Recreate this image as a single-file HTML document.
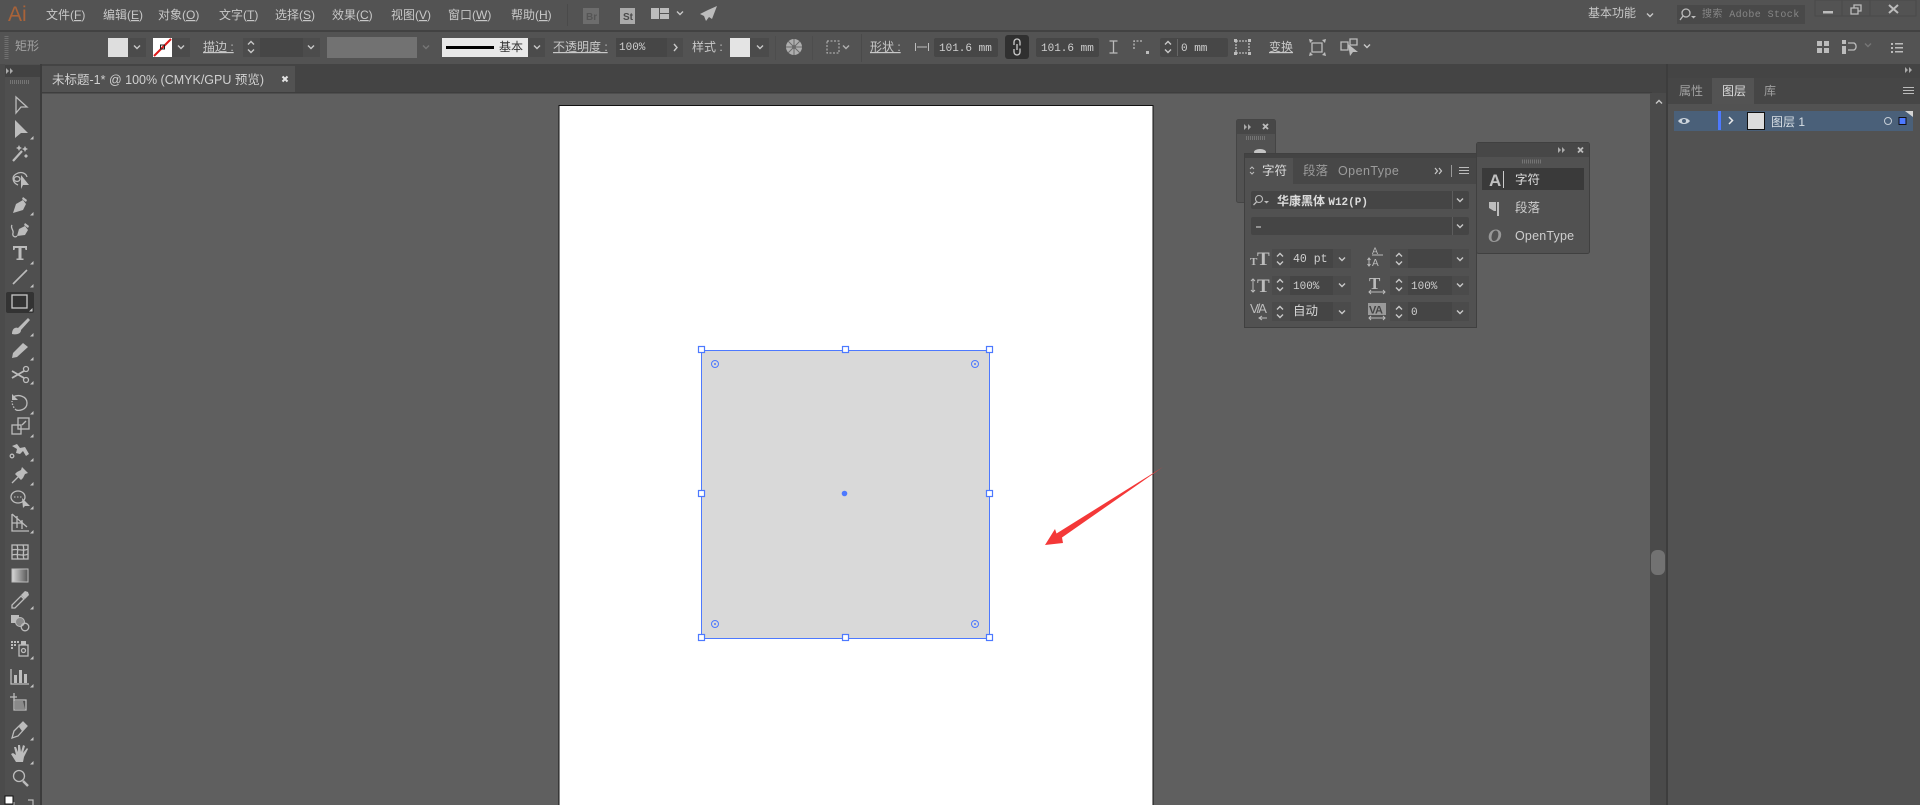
<!DOCTYPE html>
<html lang="zh"><head><meta charset="utf-8"><title>Ai</title>
<style>
html,body{margin:0;padding:0;background:#5f5f5f;width:1920px;height:805px;overflow:hidden}
svg{display:block;filter:blur(.35px)}
text{font-family:"Liberation Sans","WenQuanYi Zen Hei","Noto Sans CJK SC",sans-serif;font-size:12px;fill:#c8c8c8}
.m{font-family:"Liberation Mono","WenQuanYi Zen Hei",monospace;font-size:11px;fill:#d0d0d0}
.u{text-decoration:underline}
.ic{fill:none;stroke:#bcbcbc;stroke-width:1.300}
.fl{fill:#bcbcbc;stroke:none}
.ch{fill:none;stroke:#c8c8c8;stroke-width:1.400}
.h{fill:#fff;stroke:#4d79ff;stroke-width:1.200}
</style></head><body>
<svg width="1920" height="805" viewBox="0 0 1920 805" xmlns="http://www.w3.org/2000/svg">
<defs>
<path id="c" class="ch" d="M-3-1.500L0 1.500L3-1.500"/>
<path id="cu" class="ch" d="M-3 1.500L0-1.500L3 1.500"/>
<g id="sp"><use href="#cu" y="-4"/><use href="#c" y="4"/></g>
<path id="t" d="M0 3.500H3.500V0Z" fill="#c4c4c4"/>
<path id="ff" d="M-3-3L0 0L-3 3ZM1-3L4 0L1 3Z" fill="#aaa"/>
</defs>

<!-- base -->
<rect width="1920" height="805" fill="#5f5f5f"/>
<!-- top bar -->
<rect width="1920" height="30" fill="#535353"/>
<rect y="30" width="1920" height="2" fill="#424242"/>
<rect y="32" width="1920" height="32" fill="#535353"/>
<!-- tab bar -->
<rect y="64" width="1920" height="29" fill="#444"/>
<rect x="42" y="66" width="253" height="27" fill="#525252"/>
<rect x="42" y="92" width="1610" height="1.500" fill="#3e3e3e"/>

<!-- menu -->
<text x="8" y="21" style="font-size:21px;fill:#a96339;font-weight:400">Ai</text>
<g>
<text x="46" y="19">文件(<tspan class="u">F</tspan>)</text>
<text x="103" y="19">编辑(<tspan class="u">E</tspan>)</text>
<text x="158" y="19">对象(<tspan class="u">O</tspan>)</text>
<text x="219" y="19">文字(<tspan class="u">T</tspan>)</text>
<text x="275" y="19">选择(<tspan class="u">S</tspan>)</text>
<text x="332" y="19">效果(<tspan class="u">C</tspan>)</text>
<text x="391" y="19">视图(<tspan class="u">V</tspan>)</text>
<text x="448" y="19">窗口(<tspan class="u">W</tspan>)</text>
<text x="511" y="19">帮助(<tspan class="u">H</tspan>)</text>
</g>
<rect x="567" y="4" width="1" height="22" fill="#4a4a4a"/>
<rect x="583" y="8" width="16" height="16" fill="#6d6d6d"/>
<text x="586" y="20" style="font-size:10px;fill:#555;font-weight:700">Br</text>
<rect x="620" y="8" width="15" height="16" fill="#aaa"/>
<text x="623" y="20" style="font-size:10px;fill:#4a4a4a;font-weight:700">St</text>
<path class="fl" d="M651 8h8v11h-8zM660 8h9v5h-9zM660 14h9v5h-9z"/>
<use href="#c" x="680" y="13"/>
<path class="fl" d="M717 6L708 10L700 14L704 16L706 21L709 17L712 19Z"/>

<text x="1588" y="17">基本功能</text>
<use href="#c" x="1650" y="15"/>
<rect x="1677" y="5" width="128" height="19" fill="#494949"/>
<circle cx="1686" cy="13" r="4" class="ic"/><path class="ic" d="M1683 16L1680 20"/><path class="fl" d="M1691 16h5l-2.500 2.500z"/>
<text x="1702" y="17" class="m" style="font-size:10px;fill:#868686;letter-spacing:.4px">搜索 Adobe Stock</text>
<rect x="1815" y="0" width="101" height="16" fill="none" stroke="#4a4a4a"/>
<path d="M1842 0v16M1870 0v16" stroke="#4a4a4a"/>
<rect x="1823" y="11" width="10" height="2.500" fill="#bcbcbc"/>
<path class="ic" d="M1851 8h7v6h-7zM1854 8V5h7v6h-3"/>
<path class="ic" style="stroke-width:2" d="M1889 5l9 8M1898 5l-9 8"/>

<!-- control bar -->
<path d="M6.500 36V60" stroke="#707070" stroke-width="4" stroke-dasharray="1 1"/>
<text x="15" y="50" style="fill:#a2a2a2">矩形</text>
<rect x="108" y="38" width="20" height="19" fill="#dedede"/>
<rect x="128" y="38" width="18" height="19" fill="#4b4b4b"/>
<use href="#c" x="137" y="47"/>
<rect x="153" y="38" width="19" height="19" fill="#fff"/>
<path d="M154 56L171 39" stroke="#e01a1a" stroke-width="2"/>
<rect x="160.500" y="45" width="4" height="4" fill="none" stroke="#222"/>
<rect x="172" y="38" width="18" height="19" fill="#4b4b4b"/>
<use href="#c" x="181" y="47"/>
<text x="203" y="51" style="text-decoration:underline dotted">描边 :</text>
<rect x="243" y="38" width="77" height="19" fill="#4c4c4c"/>
<use href="#sp" x="251" y="47"/>
<rect x="260" y="38" width="43" height="19" fill="#464646"/>
<use href="#c" x="311" y="47"/>
<rect x="327" y="37" width="90" height="21" fill="#727272"/>
<use href="#c" x="426" y="47" opacity=".3"/>
<rect x="442" y="38" width="86" height="19" fill="#e8e8e8"/>
<rect x="446" y="46" width="48" height="3" fill="#000"/>
<text x="499" y="51" style="fill:#333">基本</text>
<rect x="528" y="38" width="17" height="19" fill="#4b4b4b"/>
<use href="#c" x="537" y="47"/>
<text x="553" y="51" style="text-decoration:underline dotted">不透明度 :</text>
<rect x="616" y="38" width="51" height="19" fill="#464646"/>
<text x="619" y="50" class="m">100%</text>
<rect x="667" y="38" width="16" height="19" fill="#4c4c4c"/>
<path class="ch" d="M674 44l3 3.500-3 3.500"/>
<text x="692" y="51">样式 :</text>
<rect x="730" y="38" width="20" height="19" fill="#e4e4e4"/>
<rect x="750" y="38" width="19" height="19" fill="#4b4b4b"/>
<use href="#c" x="760" y="47"/>
<rect x="775" y="36" width="1" height="24" fill="#4d4d4d"/>
<circle cx="794" cy="47" r="8" fill="#aeaeae"/>
<path d="M794 39v16M786 47h16M788 41l12 12M800 41l-12 12" stroke="#6a6a6a"/>
<circle cx="794" cy="47" r="2" fill="#6a6a6a"/>
<rect x="812" y="36" width="1" height="24" fill="#4d4d4d"/>
<rect x="827" y="41" width="12" height="12" fill="none" stroke="#bcbcbc" stroke-dasharray="2 1.500"/>
<use href="#c" x="846" y="47" opacity=".8"/>
<rect x="861" y="34" width="1" height="28" fill="#4a4a4a"/>
<text x="870" y="51" style="text-decoration:underline dotted">形状 :</text>
<path class="ic" style="stroke-width:1" d="M915.500 43v8M928.500 43v8M917 47h10"/>
<rect x="934" y="38" width="64" height="19" rx="2" fill="#464646"/>
<text x="939" y="51" class="m">101.6 mm</text>
<rect x="1005" y="35" width="24" height="24" rx="3" fill="#303030"/>
<path d="M1014 42a2.800 2.800 0 0 1 6 0v3.500M1020 48.500v3.500a2.800 2.800 0 0 1-6 0M1014 42v3M1014 49v3M1017 44v6" class="ic" style="stroke-width:1.300;stroke:#ccc"/>
<rect x="1036" y="38" width="63" height="19" rx="2" fill="#464646"/>
<text x="1041" y="51" class="m">101.6 mm</text>
<path class="ic" d="M1109.500 41h8M1109.500 53h8M1113.500 41v12"/>
<path class="ic" stroke-dasharray="2 1.500" d="M1134 49V41h8"/><path class="fl" d="M1146 51h3v3h-3z"/>
<rect x="1160" y="38" width="68" height="19" rx="2" fill="#474747"/>
<use href="#sp" x="1168" y="47"/><rect x="1177" y="39" width="1" height="17" fill="#666"/>
<text x="1181" y="51" class="m">0 mm</text>
<path class="ic" d="M1236 41h13v12h-13z" stroke-dasharray="2 1"/><path class="fl" d="M1234 39h3v3h-3zM1248 39h3v3h-3zM1234 52h3v3h-3zM1248 52h3v3h-3z"/>
<text x="1269" y="51" style="text-decoration:underline dotted">变换</text>
<path class="ic" d="M1312 43h10v9h-10z"/><path class="fl" d="M1309 39l4 1-3 3zM1326 39l-1 4-3-3zM1309 56l1-4 3 3zM1326 56l-4-1 3-3z"/>
<path class="ic" d="M1341 42h7v8h-7zM1350 39h7v6h-7z"/><path class="fl" d="M1348 44l10 8-5 0-3 4z"/>
<use href="#c" x="1367" y="46"/>
<path class="fl" d="M1817 41h5v5h-5zM1824 41h5v5h-5zM1817 48h5v5h-5zM1824 48h5v5h-5z"/>
<path class="fl" d="M1842 40h4v4h-4zM1842 46h4v4h-4zM1842 50h4v4h-4z"/><path class="ic" d="M1848 43h6a4 4 0 0 1 0 7h-6"/>
<use href="#c" x="1868" y="45" opacity=".3"/>
<path class="fl" d="M1891 43h2v2h-2zM1891 47h2v2h-2zM1891 51h2v2h-2zM1895 43h8v1.500h-8zM1895 47h8v1.500h-8zM1895 51h8v1.500h-8z"/>

<!-- doc tab -->
<text x="52" y="84" style="font-size:12.500px;fill:#d0d0d0">未标题-1* @ 100% (CMYK/GPU 预览)</text>
<path d="M282.500 76.500l5 5M287.500 76.500l-5 5" stroke="#e4e4e4" stroke-width="2"/>

<!-- left toolbar -->
<rect x="0" y="64" width="40" height="741" fill="#4f4f4f"/>
<rect x="5" y="65" width="35" height="12" fill="#424242"/>
<rect x="0" y="64" width="5" height="741" fill="#4b4b4b"/>
<use href="#ff" x="9" y="71"/>
<path d="M10 82H29" stroke="#747474" stroke-width="4" stroke-dasharray="1 1"/>
<rect x="40" y="64" width="2" height="741" fill="#3c3c3c"/>
<rect x="6" y="292" width="28" height="21" rx="2" fill="#333"/>

<g transform="translate(20,105)"><path class="ic" d="M-4-8L7 2H1L-4 8Z"/></g>
<g transform="translate(20,129)"><path class="fl" d="M-5-9L8 4H1L-5 9Z"/></g><use href="#t" x="30" y="136"/>
<g transform="translate(20,153)"><path class="ic" style="stroke-width:2.200" d="M-7 8L2-2"/><path class="fl" d="M-1-8l1 2 2 1-2 1-1 2-1-2-2-1 2-1zM5-7l1 2 2 1-2 1-1 2-1-2-2-1 2-1zM6 1l1 1 1 1-1 1-1 1-1-1-1-1 1-1z"/></g>
<g transform="translate(20,180)"><path class="ic" d="M-2 5C-7 3-9-3-4-6S6-7 7-3"/><ellipse cx="-3" cy="-1" rx="3" ry="2.500" class="ic"/><path class="fl" d="M1-5L9 5H3L1 9Z"/></g>
<g transform="translate(20,205)"><path class="fl" d="M-7 8L-4-1 3-5 6-1 3 5Z"/><path class="fl" d="M3-8L7-5 6-3 2-6Z"/></g><use href="#t" x="30" y="212"/>
<g transform="translate(21,230)"><path class="fl" d="M-4 6L-2-1 4-4 7 0 4 5Z"/><path class="fl" d="M4-7L8-4 7-2 3-5Z"/><path class="ic" d="M-4 6C-6 8-9 6-8 3S-11-2-9-5"/></g>
<g transform="translate(20,253)"><path class="fl" d="M-7-7H7V-3H5.500L5-5H1.500V5.500H3.500V7H-3.500V5.500H-1.500V-5H-5L-5.500-3H-7Z"/></g><use href="#t" x="30" y="261"/>
<g transform="translate(20,277)"><path class="ic" style="stroke-width:1.600" d="M-7 7L7-7"/></g><use href="#t" x="30" y="284"/>
<g transform="translate(20,302)"><rect x="-8" y="-7" width="15" height="13" class="ic" style="stroke:#c8c8c8"/></g><use href="#t" x="29" y="308"/>
<g transform="translate(20,326)"><path class="fl" d="M-8 8C-8 2-4 1-2 2L8-8 10-6 1 4C1 8-4 9-8 8Z"/></g><use href="#t" x="30" y="333"/>
<g transform="translate(20,350)"><path class="fl" d="M-8 8L-7 3 3-7 8-3-3 7Z"/></g><use href="#t" x="30" y="357"/>
<g transform="translate(20,375)"><circle cx="6" cy="-6" r="2.500" class="ic"/><circle cx="6" cy="5" r="2.500" class="ic"/><path class="ic" style="stroke-width:1.800" d="M4-4L-8 3M4 3L-8-4"/></g><use href="#t" x="30" y="381"/>
<g transform="translate(20,403)"><path class="ic" d="M-7-6C-2-9 7-7 7 0S-1 8-4 7"/><path class="ic" stroke-dasharray="1.500 1.500" d="M-4 7C-6 5-8 2-8-2"/><path class="fl" d="M-8-9V-3H-2Z"/></g><use href="#t" x="30" y="411"/>
<g transform="translate(20,427)"><rect x="-2" y="-9" width="11" height="11" class="ic"/><rect x="-8" y="-2" width="9" height="9" class="ic"/><path class="ic" d="M2-2L6-6"/></g><use href="#t" x="30" y="434"/>
<g transform="translate(20,450)"><path class="fl" d="M-8-4L-3-6 0-2 5-3 9 4 6 6 3 1 0 4-4 3-3-1Z"/><circle cx="-8" cy="6" r="1.800" class="ic"/></g><use href="#t" x="30" y="458"/>
<g transform="translate(20,475)"><path class="fl" d="M2-8L8-2 5-1 3 3 1 5-5-1-3-3 1-5Z"/><path class="ic" d="M-2 2L-8 8"/></g><use href="#t" x="30" y="482"/>
<g transform="translate(20,498)"><ellipse cx="-2" cy="-1" rx="7" ry="6" class="ic"/><path stroke="#c4c4c4" stroke-dasharray="1.500 1.500" d="M-6-1H3"/><path class="fl" d="M2 0L10 8H5L3 10Z"/></g><use href="#t" x="30" y="506"/>
<g transform="translate(20,523)"><path class="ic" d="M-8-9V8H9M-8-9L7 4M-8 0H3M-3-7V5M2-3V6"/></g><use href="#t" x="30" y="530"/>
<g transform="translate(20,552)"><rect x="-8" y="-7" width="16" height="14" class="ic"/><path class="ic" d="M-8-2C-3-4 3 0 8-3M-8 3C-3 1 3 5 8 2M-3-7C-1-2-4 3-2 7M3-7C5-2 2 3 4 7"/></g>
<defs><linearGradient id="g" x1="0" x2="1"><stop offset="0" stop-color="#d8d8d8"/><stop offset="1" stop-color="#555"/></linearGradient></defs>
<rect x="12" y="569" width="16" height="13" fill="url(#g)" stroke="#bcbcbc"/>
<g transform="translate(20,600)"><path class="ic" d="M-8 8L-8 5 1-4 4-1-5 8Z"/><path class="fl" d="M1-5L5-9 8-8 9-5 5-1Z"/></g><use href="#t" x="30" y="606"/>
<g transform="translate(20,623)"><rect x="-9" y="-8" width="8" height="8" class="fl"/><circle cx="0" cy="-1" r="4.500" fill="#8a8a8a" stroke="#bcbcbc"/><circle cx="5" cy="4" r="3.800" class="ic"/></g>
<g transform="translate(20,648)"><path class="fl" d="M-9-7h2v2h-2zM-6-7h2v2h-2zM-3-7h2v2h-2zM-9-4h2v2h-2zM-6-4h2v2h-2zM-9-1h2v2h-2z"/><rect x="-1" y="-3" width="9" height="11" class="ic"/><circle cx="3.500" cy="2.500" r="2" class="ic"/><rect x="1" y="-7" width="5" height="4" class="fl"/></g><use href="#t" x="30" y="656"/>
<g transform="translate(20,677)"><path class="ic" d="M-9-8V7H9"/><path class="fl" d="M-6-2h3v8h-3zM-1-7h3v13h-3zM4-3h3v9h-3z"/></g><use href="#t" x="30" y="684"/>
<g transform="translate(20,703)"><path class="ic" d="M-6-3H6V7H-6z"/><path class="fl" d="M-5-2H3L5 6H-5Z" style="fill:#8a8a8a"/><path class="ic" d="M-10-6H-3M-6-10V-2"/></g>
<g transform="translate(20,730)"><path class="ic" d="M-8 8L-6 1 3-8 7-4-2 6Z"/><path class="fl" d="M-1-3L3-8 7-4 2 1Z"/></g><use href="#t" x="30" y="737"/>
<g transform="translate(20,753)"><path class="fl" d="M-4 9L-9 1-7 0-4 2-6-6-4-6-2-1-2-8H0L1-1 3-8 5-7 3 0 7-5 8-4 4 4 3 9Z"/></g><use href="#t" x="30" y="761"/>
<g transform="translate(20,778)"><circle cx="-1" cy="-2" r="5.500" class="ic"/><path class="ic" style="stroke-width:2.500" d="M3 3L8 8"/></g>
<rect x="5" y="796" width="8" height="8" fill="#fff" stroke="#111"/>
<path class="ic" style="stroke-width:1" d="M14 802v3"/>
<path class="ic" style="stroke-width:1.200" d="M28 800h5v5"/>

<!-- canvas / artboard -->
<rect x="559" y="105.500" width="594" height="720" fill="#fff" stroke="#111" stroke-width="1"/>
<rect x="701.500" y="350.500" width="288" height="288" fill="#d9d9d9" stroke="#4d79ff" stroke-width="1"/>
<g>
<rect class="h" x="698.500" y="346.500" width="6" height="6"/><rect class="h" x="842.500" y="346.500" width="6" height="6"/><rect class="h" x="986.500" y="346.500" width="6" height="6"/>
<rect class="h" x="698.500" y="490.500" width="6" height="6"/><rect class="h" x="986.500" y="490.500" width="6" height="6"/>
<rect class="h" x="698.500" y="634.500" width="6" height="6"/><rect class="h" x="842.500" y="634.500" width="6" height="6"/><rect class="h" x="986.500" y="634.500" width="6" height="6"/>
</g>
<g fill="none" stroke="#4d79ff"><circle cx="715" cy="364" r="3.500"/><circle cx="975" cy="364" r="3.500"/><circle cx="715" cy="624" r="3.500"/><circle cx="975" cy="624" r="3.500"/></g>
<g fill="#4d79ff"><circle cx="715" cy="364" r="1"/><circle cx="975" cy="364" r="1"/><circle cx="715" cy="624" r="1"/><circle cx="975" cy="624" r="1"/><circle cx="844.500" cy="493.500" r="2.800"/></g>
<path fill="#f43838" d="M1045 545L1055 529 1056.500 533.500 1163 467 1062 537.500 1063 543Z"/>

<!-- scrollbar + right panel -->
<rect x="1650" y="93" width="18" height="712" fill="#4a4a4a"/>
<rect x="1666" y="64" width="2" height="741" fill="#3d3d3d"/>
<use href="#cu" x="1659" y="102"/>
<rect x="1651" y="550" width="14" height="25" rx="6" fill="#727272"/>
<rect x="1668" y="64" width="252" height="741" fill="#525252"/>
<rect x="1668" y="64" width="252" height="14" fill="#444"/>
<use href="#ff" x="1908" y="70"/>
<rect x="1668" y="78" width="252" height="26" fill="#464646"/>
<rect x="1712" y="78" width="42" height="26" fill="#535353"/>
<text x="1679" y="95" style="fill:#a0a0a0">属性</text>
<text x="1722" y="95" style="fill:#dcdcdc">图层</text>
<text x="1764" y="95" style="fill:#a0a0a0">库</text>
<path class="fl" d="M1903 87h11v1h-11zM1903 90h11v1h-11zM1903 93h11v1h-11z"/>
<rect x="1674" y="111" width="239" height="20" fill="#4a6079"/>
<path d="M1905 111h8v6Z" fill="#d4d4d4"/>
<path d="M1678 121c3-4 9-4 12 0-3 4-9 4-12 0Z" fill="#ccd4dc"/><circle cx="1684" cy="121" r="2" fill="#4a6079"/>
<rect x="1718" y="111" width="3" height="19" fill="#4d79ff"/>
<path d="M1729 117l3.500 3.500-3.500 3.500" fill="none" stroke="#e8e8e8" stroke-width="1.500"/>
<rect x="1747.500" y="112.500" width="17" height="17" fill="#dcdcdc" stroke="#111"/>
<text x="1771" y="126" style="fill:#d8dfe5">图层 1</text>
<circle cx="1888" cy="121" r="3.500" fill="none" stroke="#c6ced6"/>
<rect x="1899" y="117.500" width="7" height="7" fill="#4d79ff" stroke="#111"/>

<!-- tiny panel -->
<rect x="1236.500" y="119.500" width="39" height="83" rx="2" fill="#525252" stroke="#454545"/>
<rect x="1237" y="120" width="38" height="14" fill="#474747"/>
<use href="#ff" x="1247" y="127"/>
<path d="M1263 124l5 5M1268 124l-5 5" stroke="#bcbcbc" stroke-width="1.800"/>
<path d="M1246 138H1265" stroke="#747474" stroke-width="4" stroke-dasharray="1 1"/>
<ellipse cx="1260" cy="152" rx="6" ry="3" fill="#c4c4c4"/>

<!-- character panel -->
<rect x="1244.500" y="153.500" width="232" height="174" fill="#515151" stroke="#404040"/>
<rect x="1245" y="154" width="231" height="4" fill="#434343"/>
<rect x="1245" y="158" width="231" height="26" fill="#474747"/>
<rect x="1245" y="158" width="48" height="26" fill="#515151"/>
<path class="ic" style="stroke-width:1" d="M1250 169l2-2 2 2M1250 172l2 2 2-2"/>
<text x="1262" y="175" style="font-size:12.500px;fill:#dcdcdc">字符</text>
<text x="1303" y="175" style="font-size:12.500px;fill:#9c9c9c">段落</text>
<text x="1338" y="175" style="font-size:12.500px;fill:#9c9c9c;letter-spacing:.45px">OpenType</text>
<path class="ch" style="stroke-width:1.200" d="M1435 168l2.500 3-2.500 3M1439 168l2.500 3-2.500 3"/>
<rect x="1451" y="165" width="1" height="12" fill="#999"/>
<path class="fl" d="M1459 167h10v1h-10zM1459 170h10v1h-10zM1459 173h10v1h-10z"/>

<rect x="1251" y="191" width="218" height="18" rx="2" fill="#454545"/>
<rect x="1452" y="191" width="1" height="18" fill="#5d5d5d"/>
<circle cx="1259" cy="199" r="3.500" class="ic" style="stroke-width:1.100"/><path class="ic" d="M1256.500 202l-3 3"/><path class="fl" d="M1264 201h5l-2.500 2.500z"/>
<text x="1277" y="205" style="fill:#dcdcdc;font-weight:700">华康黑体 <tspan class="m" style="fill:#dcdcdc;font-weight:700">W12(P)</tspan></text>
<use href="#c" x="1460" y="200"/>
<rect x="1251" y="217" width="218" height="18" rx="2" fill="#454545"/>
<rect x="1452" y="217" width="1" height="18" fill="#5d5d5d"/>
<rect x="1256" y="226.500" width="5" height="1" fill="#ddd"/>
<use href="#c" x="1460" y="226"/>

<g fill="#4b4b4b">
<rect x="1272" y="249" width="79" height="19"/><rect x="1272" y="276" width="79" height="19"/><rect x="1272" y="302" width="79" height="19"/>
<rect x="1390" y="249" width="79" height="19"/><rect x="1390" y="276" width="79" height="19"/><rect x="1390" y="302" width="79" height="19"/>
</g>
<g fill="#454545">
<rect x="1290" y="249" width="43" height="19"/><rect x="1290" y="276" width="43" height="19"/><rect x="1290" y="302" width="43" height="19"/>
<rect x="1408" y="249" width="44" height="19"/><rect x="1408" y="276" width="44" height="19"/><rect x="1408" y="302" width="44" height="19"/>
</g>
<use href="#sp" x="1280" y="259"/><use href="#sp" x="1280" y="285"/><use href="#sp" x="1280" y="312"/>
<use href="#sp" x="1399" y="259"/><use href="#sp" x="1399" y="285"/><use href="#sp" x="1399" y="312"/>
<use href="#c" x="1342" y="259"/><use href="#c" x="1342" y="285"/><use href="#c" x="1342" y="312"/>
<use href="#c" x="1460" y="259"/><use href="#c" x="1460" y="285"/><use href="#c" x="1460" y="312"/>
<text x="1293" y="262" class="m" style="font-size:11.500px">40 pt</text>
<text x="1293" y="289" class="m" style="font-size:11px">100%</text>
<text x="1293" y="315" style="fill:#d8d8d8;font-size:12.500px">自动</text>
<text x="1411" y="289" class="m" style="font-size:11px">100%</text>
<text x="1411" y="315" class="m" style="font-size:11px">0</text>
<text x="1250" y="265" style="font-family:'Liberation Serif',serif;font-weight:700;font-size:11px;fill:#bcbcbc">T</text>
<text x="1257" y="265" style="font-family:'Liberation Serif',serif;font-weight:700;font-size:19px;fill:#bcbcbc">T</text>
<path class="ic" style="stroke-width:1" d="M1253 279v13M1251 281l2-2 2 2M1251 290l2 2 2-2"/>
<text x="1257" y="292" style="font-family:'Liberation Serif',serif;font-weight:700;font-size:19px;fill:#bcbcbc">T</text>
<text x="1250" y="313" style="font-size:13px;fill:#bcbcbc;letter-spacing:-2px">V/A</text>
<path class="ic" style="stroke-width:1" d="M1259 318h8M1262 316l-3 2 3 2"/>
<text x="1372" y="254" style="font-size:9px;fill:#bcbcbc">A</text>
<text x="1372" y="266" style="font-size:10px;fill:#bcbcbc">A</text>
<path d="M1372 255h11" stroke="#bcbcbc"/>
<path class="ic" style="stroke-width:1" d="M1369 258v8M1367.500 260l1.500-2 1.500 2M1367.500 264l1.500 2 1.500-2"/>
<text x="1369" y="289" style="font-family:'Liberation Serif',serif;font-weight:700;font-size:17px;fill:#bcbcbc">T</text>
<path class="ic" style="stroke-width:1" d="M1369 292h16M1371 290l-2 2 2 2M1383 290l2 2-2 2"/>
<rect x="1368" y="303" width="18" height="12" fill="#9a9a9a"/>
<text x="1369" y="313.500" style="font-size:11px;fill:#444;letter-spacing:-.5px;font-weight:700">VA</text>
<path class="ic" style="stroke-width:1" d="M1369 318h16M1371 316l-2 2 2 2M1383 316l2 2-2 2"/>

<!-- small panel -->
<rect x="1476.500" y="142.500" width="113" height="111" rx="2" fill="#515151" stroke="#404040"/>
<rect x="1477" y="143" width="112" height="14" fill="#474747"/>
<use href="#ff" x="1561" y="150"/>
<path d="M1578 147.500l5 5M1583 147.500l-5 5" stroke="#bcbcbc" stroke-width="1.800"/>
<path d="M1522 161.500H1542" stroke="#747474" stroke-width="4" stroke-dasharray="1 1"/>
<rect x="1482" y="168" width="102" height="22" fill="#3a3a3a"/>
<text x="1489" y="186" style="font-size:17px;font-weight:700;fill:#c0c0c0">A</text>
<rect x="1503" y="171" width="1" height="17" fill="#ccc"/>
<text x="1515" y="184" style="font-size:12.500px;fill:#dedede">字符</text>
<path class="fl" d="M1489 202h7v9h-2l-5-3zM1497 202h2v14h-2z"/>
<text x="1515" y="212" style="font-size:12.500px;fill:#cecece">段落</text>
<text x="1488" y="242" style="font-family:'Liberation Serif',serif;font-style:italic;font-weight:700;font-size:19px;fill:#989898">O</text>
<text x="1515" y="240" style="font-size:12.500px;fill:#cecece;letter-spacing:.2px">OpenType</text>
</svg>
</body></html>
